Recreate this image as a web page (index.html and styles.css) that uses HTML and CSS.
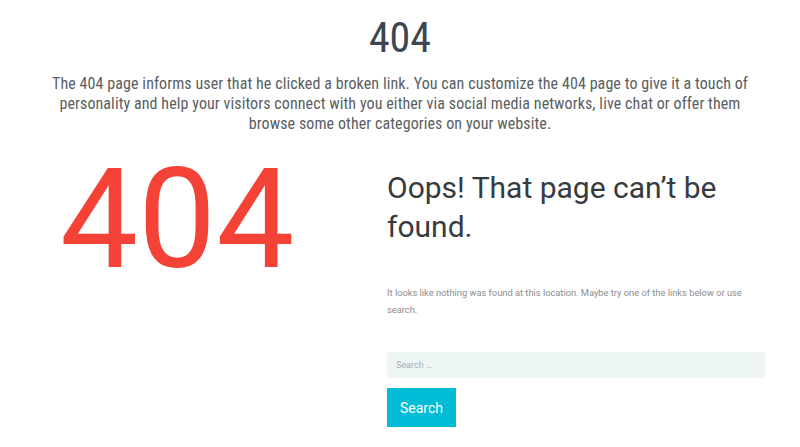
FILE: index.html
```html
<!DOCTYPE html>
<html lang="en">
<head>
<meta charset="utf-8">
<title>404</title>
<link rel="stylesheet" href="styles.css">
</head>
<body>
<main class="page">
  <header class="intro">
    <h1 class="intro-title">404</h1>
    <p class="intro-text">The 404 page informs user that he clicked a broken link. You can customize the 404 page to give it a touch of personality and help your visitors connect with you either via social media networks, live chat or offer them browse some other categories on your website.</p>
  </header>
  <section class="error">
    <div class="error-code">404</div>
    <div class="error-body">
      <h2 class="error-title">Oops! That page can’t be found.</h2>
      <p class="error-text">It looks like nothing was found at this location. Maybe try one of the links below or use search.</p>
      <form class="search" onsubmit="return false">
        <input class="search-field" type="search" placeholder="Search …">
        <button class="search-btn" type="submit">Search</button>
      </form>
    </div>
  </section>
</main>
</body>
</html>
```
FILE: styles.css
```css
*{box-sizing:border-box}
html,body{margin:0;padding:0;background:#fff}
body{font-family:"Roboto","Noto Sans",sans-serif}
.page{width:800px;height:447px;overflow:hidden}
.intro{padding-top:14px;text-align:center}
.intro-title{margin:0;font-family:"Roboto Condensed","Roboto",sans-serif;font-size:42px;line-height:48px;font-weight:400;color:#3d4550}
.intro-text{width:710px;margin:12px auto 0;font-family:"Roboto Condensed","Roboto",sans-serif;font-size:16px;letter-spacing:0.09px;line-height:20px;color:#5a5e62;font-weight:400}
.error{display:grid;grid-template-columns:352px 378px;margin:12px 0 0 35px}
.error-code{padding:4px 0 0 25px;font-size:139px;line-height:139px;color:#f44336;font-weight:400}
.error-body{padding-top:22px}
.error-title{margin:0;font-size:30px;line-height:39px;font-weight:400;color:#363b40}
.error-text{margin:38px 0 0;font-size:9.3px;line-height:17px;color:#8a8d90}
.search{margin-top:34px;display:flex;flex-direction:column;align-items:flex-start;gap:10px}
.search-field{width:378px;height:26px;border:0;background:#eef5f5;padding:0 9px;font-family:inherit;font-size:9px;color:#555;outline:none}
.search-field::placeholder{color:#a9adb0}
.search-btn{width:69px;height:39px;border:0;background:#00bcd4;color:#fff;font-family:inherit;font-size:14px;padding:0}
```
